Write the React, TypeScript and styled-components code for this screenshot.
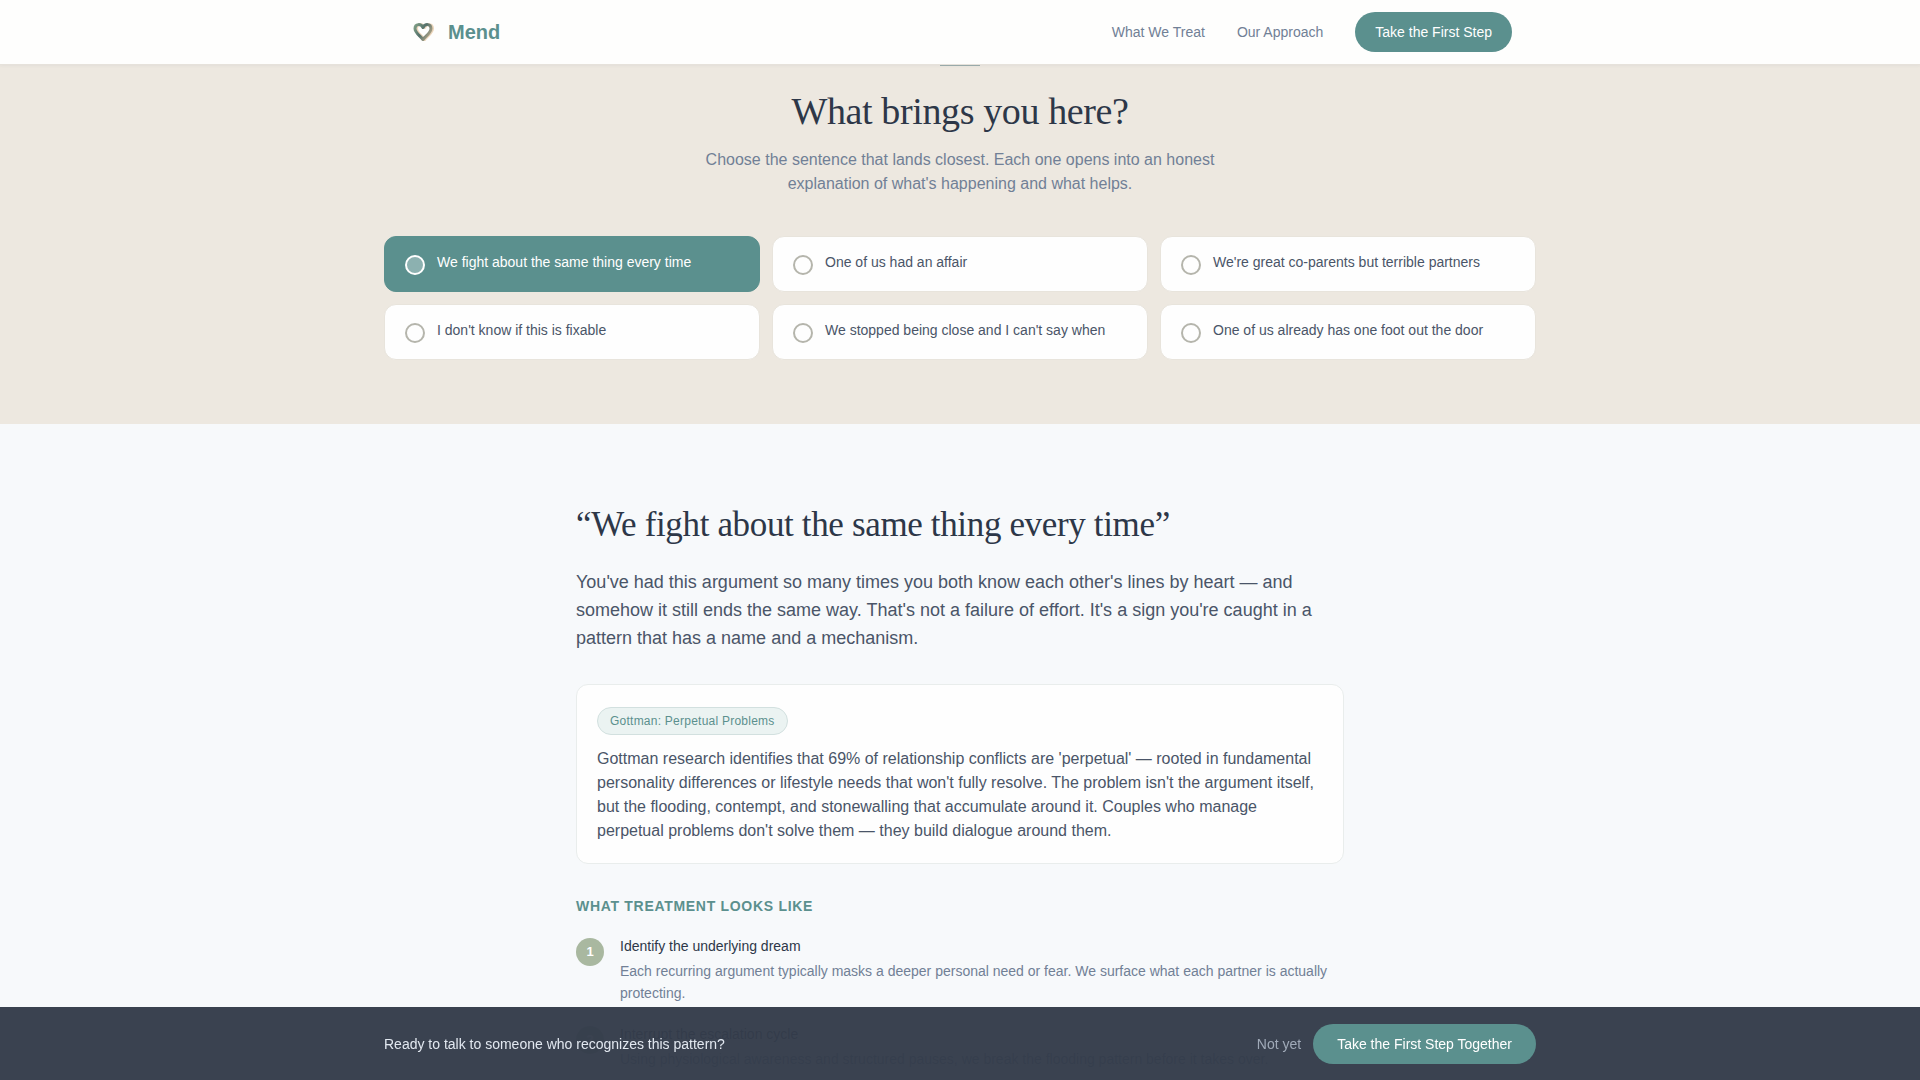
import React, { useState } from "react";
import styled, { createGlobalStyle, css } from "styled-components";

const color = {
  teal: "#5b908e",
  sage: "#a9b8a0",
  sand: "#ede8e0",
  mist: "#f7f9fb",
  ink: "#2d3748",
  body: "#4a5568",
  muted: "#718096",
};

const sans = `"Liberation Sans", Arial, sans-serif`;
const serif = `"Liberation Serif", "Times New Roman", serif`;

const GlobalStyle = createGlobalStyle`
  *, *::before, *::after { box-sizing: border-box; }
  html { background: ${color.mist}; scrollbar-width: none; }
  body {
    margin: 0;
    font-family: ${sans};
    font-size: 16px;
    line-height: 24px;
    color: ${color.ink};
  }
  h1, h2, h3, h4, p, ol, fieldset { margin: 0; padding: 0; border: 0; font-weight: 400; }
  button { font-family: inherit; cursor: pointer; border: 0; }
  a { text-decoration: none; color: inherit; }
`;

const Header = styled.header`
  position: sticky;
  top: 0;
  z-index: 2;
  background: #fefefd;
  border-bottom: 1px solid #e6e2db;
  box-shadow: 0 1px 3px rgba(45, 55, 72, 0.05);
`;

const HeaderInner = styled.div`
  max-width: 1152px;
  height: 64px;
  margin: 0 auto;
  padding: 0 24px;
  display: flex;
  align-items: center;
  justify-content: space-between;
`;

const Brand = styled.a`
  display: flex;
  align-items: center;
  gap: 8px;
  font-size: 20px;
  line-height: 28px;
  font-weight: 700;
  color: ${color.teal};
`;

const Nav = styled.nav`
  display: flex;
  align-items: center;
  gap: 32px;
  font-size: 14px;
  line-height: 20px;
`;

const NavLink = styled.a`
  color: ${color.muted};
`;

const PillButton = styled.button<{ $pad: number }>`
  padding: 10px ${(p) => p.$pad}px;
  border-radius: 20px;
  background: ${color.teal};
  color: #fff;
  font-size: 14px;
  line-height: 20px;
`;

const Picker = styled.section`
  padding-bottom: 64px;
  background: ${color.sand};
`;

const Rule = styled.div`
  width: 40px;
  height: 1px;
  margin: 0 auto 21px;
  background: #9dafae;
`;

const PickerTitle = styled.h2`
  font-family: ${serif};
  font-size: 38px;
  line-height: 48px;
  letter-spacing: -0.01em;
  text-align: center;
`;

const PickerLead = styled.p`
  max-width: 512px;
  margin: 13px auto 40px;
  text-align: center;
  color: ${color.muted};
`;

const OptionGrid = styled.fieldset`
  max-width: 1152px;
  margin: 0 auto;
  display: grid;
  grid-template-columns: repeat(3, 1fr);
  gap: 12px;
`;

const Option = styled.label<{ $active: boolean }>`
  display: flex;
  align-items: flex-start;
  gap: 12px;
  padding: 16px 20px;
  border: 1px solid #e8e4dc;
  border-radius: 12px;
  background: #fefefe;
  color: ${color.body};
  font-size: 14px;
  line-height: 18px;
  cursor: pointer;
  ${(p) =>
    p.$active &&
    css`
      background: ${color.teal};
      border-color: ${color.teal};
      color: #fff;
    `}
`;

const Radio = styled.input`
  appearance: none;
  flex: none;
  width: 20px;
  height: 20px;
  margin: 2px 0 0;
  border: 2px solid #b5b5ac;
  border-radius: 50%;
  &:checked {
    border-color: #fff;
    background: rgba(255, 255, 255, 0.3);
  }
`;

const Detail = styled.section`
  max-width: 768px;
  margin: 0 auto;
  padding: 80px 0;
`;

const DetailTitle = styled.h2`
  font-family: ${serif};
  font-size: 35px;
  line-height: 42px;
  letter-spacing: -0.01em;
`;

const DetailLead = styled.p`
  margin: 22px 0 32px;
  font-size: 18px;
  line-height: 28px;
  color: ${color.body};
`;

const Insight = styled.article`
  padding: 22px 20px 20px;
  border: 1px solid #e9edec;
  border-radius: 12px;
  background: #fefefe;
  color: ${color.body};
`;

const Tag = styled.span`
  display: block;
  width: fit-content;
  margin-bottom: 12px;
  padding: 5px 12px;
  border: 1px solid #d2e0df;
  border-radius: 14px;
  background: #ebf3f2;
  color: ${color.teal};
  font-size: 12px;
  line-height: 16px;
  letter-spacing: 0.02em;
`;

const Eyebrow = styled.h3`
  margin: 32px 0 20px;
  font-size: 14px;
  line-height: 20px;
  font-weight: 700;
  letter-spacing: 0.05em;
  text-transform: uppercase;
  color: ${color.teal};
`;

const Steps = styled.ol`
  list-style: none;
  display: grid;
  gap: 20px;
`;

const Step = styled.li`
  display: flex;
  align-items: flex-start;
  gap: 16px;
  font-size: 14px;
  line-height: 22px;
`;

const StepNumber = styled.span`
  flex: none;
  width: 28px;
  margin-top: 2px;
  border-radius: 50%;
  background: ${color.sage};
  color: #fff;
  font-size: 13px;
  font-weight: 700;
  line-height: 28px;
  text-align: center;
`;

const StepTitle = styled.h4`
  font-size: 14px;
  line-height: 20px;
  margin-bottom: 4px;
`;

const StepText = styled.p`
  color: ${color.muted};
`;

const ActionBar = styled.aside`
  position: fixed;
  left: 0;
  right: 0;
  bottom: 0;
  z-index: 3;
  border-top: 1px solid rgba(45, 55, 72, 0.1);
  background: rgba(52, 60, 74, 0.97);
`;

const ActionInner = styled.div`
  max-width: 1152px;
  margin: 0 auto;
  padding: 16px 0;
  display: flex;
  align-items: center;
  gap: 12px;
  font-size: 14px;
  line-height: 20px;
`;

const ActionText = styled.p`
  flex: 1;
  color: #e2e8f0;
`;

const QuietButton = styled.button`
  padding: 0;
  background: none;
  color: #a0aab8;
  font-size: 14px;
  line-height: 20px;
`;

const options = [
  "We fight about the same thing every time",
  "One of us had an affair",
  "We're great co-parents but terrible partners",
  "I don't know if this is fixable",
  "We stopped being close and I can't say when",
  "One of us already has one foot out the door",
];

const steps = [
  {
    title: "Identify the underlying dream",
    text: "Each recurring argument typically masks a deeper personal need or fear. We surface what each partner is actually protecting.",
  },
  {
    title: "Interrupt the escalation cycle",
    text: "Using physiological awareness and structured pauses, we break the flooding pattern before it takes over.",
  },
];

const heartPath =
  "M15 23.500 C12 19.500 7 17 7 12.500 C7 7.500 13 7.500 15 11.500 C17 7.500 23 7.500 23 12.500 C23 17 18 19.500 15 23.500 Z";

function HeartLogo() {
  return (
    <svg width="32" height="32" viewBox="0 0 32 32" fill="none" aria-hidden="true">
      <defs>
        <linearGradient id="heart" x1="7" y1="9" x2="23" y2="19" gradientUnits="userSpaceOnUse">
          <stop offset="0" stopColor="#7d9c84" />
          <stop offset="0.5" stopColor="#55716b" />
          <stop offset="1" stopColor="#b0a488" />
        </linearGradient>
      </defs>
      <path
        d={heartPath}
        transform="translate(1.500 0)"
        stroke="#ecd6bc"
        strokeWidth="3"
        strokeLinejoin="round"
      />
      <path d={heartPath} stroke="url(#heart)" strokeWidth="3" strokeLinejoin="round" />
    </svg>
  );
}

export default function App() {
  const [selected, setSelected] = useState(0);
  return (
    <>
      <GlobalStyle />
      <Header>
        <HeaderInner>
          <Brand href="#top">
            <HeartLogo />
            Mend
          </Brand>
          <Nav>
            <NavLink href="#treat">What We Treat</NavLink>
            <NavLink href="#approach">Our Approach</NavLink>
            <PillButton $pad={20}>Take the First Step</PillButton>
          </Nav>
        </HeaderInner>
      </Header>
      <main>
        <Picker id="treat">
          <Rule />
          <PickerTitle>What brings you here?</PickerTitle>
          <PickerLead>
            Choose the sentence that lands closest. Each one opens into an honest explanation of
            what's happening and what helps.
          </PickerLead>
          <OptionGrid aria-label="What brings you here?">
            {options.map((text, i) => (
              <Option key={text} $active={i === selected}>
                <Radio
                  type="radio"
                  name="reason"
                  checked={i === selected}
                  onChange={() => setSelected(i)}
                />
                {text}
              </Option>
            ))}
          </OptionGrid>
        </Picker>
        <Detail id="approach">
          <DetailTitle>“{options[selected]}”</DetailTitle>
          <DetailLead>
            You've had this argument so many times you both know each other's lines by heart — and
            somehow it still ends the same way. That's not a failure of effort. It's a sign you're
            caught in a pattern that has a name and a mechanism.
          </DetailLead>
          <Insight>
            <Tag>Gottman: Perpetual Problems</Tag>
            <p>
              Gottman research identifies that 69% of relationship conflicts are 'perpetual' —
              rooted in fundamental personality differences or lifestyle needs that won't fully
              resolve. The problem isn't the argument itself, but the flooding, contempt, and
              stonewalling that accumulate around it. Couples who manage perpetual problems don't
              solve them — they build dialogue around them.
            </p>
          </Insight>
          <Eyebrow>What treatment looks like</Eyebrow>
          <Steps>
            {steps.map((step, i) => (
              <Step key={step.title}>
                <StepNumber>{i + 1}</StepNumber>
                <div>
                  <StepTitle>{step.title}</StepTitle>
                  <StepText>{step.text}</StepText>
                </div>
              </Step>
            ))}
          </Steps>
        </Detail>
      </main>
      <ActionBar>
        <ActionInner>
          <ActionText>Ready to talk to someone who recognizes this pattern?</ActionText>
          <QuietButton>Not yet</QuietButton>
          <PillButton $pad={24}>Take the First Step Together</PillButton>
        </ActionInner>
      </ActionBar>
    </>
  );
}
